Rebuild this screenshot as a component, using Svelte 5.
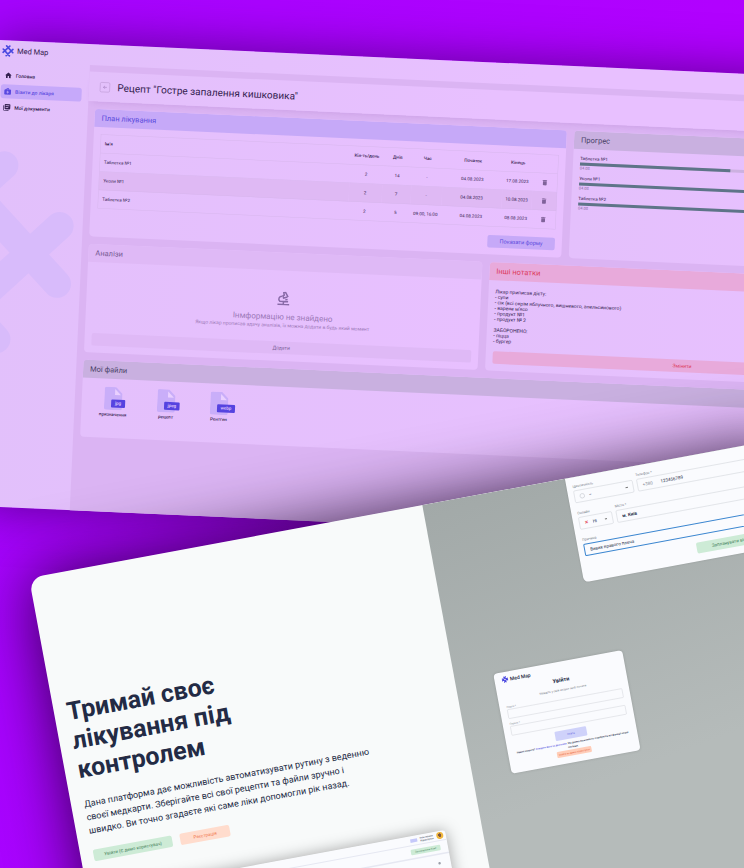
<script>
  const nav = [
    { icon: 'home', label: 'Головна' },
    { icon: 'visit', label: 'Візити до лікаря', active: true },
    { icon: 'docs', label: 'Мої документи' }
  ];
  const plan = [
    { name: 'Таблетка №1', count: 2, days: 14, time: '-', start: '04.08.2023', end: '17.08.2023' },
    { name: 'Уколи №1', count: 2, days: 7, time: '-', start: '04.08.2023', end: '10.08.2023' },
    { name: 'Таблетка №2', count: 2, days: 5, time: '09:00, 16:00', start: '04.08.2023', end: '08.08.2023' }
  ];
  const progress = [
    { name: 'Таблетка №1', value: 50, from: '04.08' },
    { name: 'Уколи №1', value: 100, from: '04.08' },
    { name: 'Таблетка №2', value: 100, from: '04.08' }
  ];
  const files = [
    { type: 'jpg', name: 'призначення' },
    { type: 'jpeg', name: 'рецепт' },
    { type: 'webp', name: 'Рентген' }
  ];
  const notes = `Лікар приписав дієту:
- супи
- сік (всі окрім яблучного, вишневого, апельсинового)
- варене м'ясо
- продукт №1
- продукт № 2

ЗАБОРОНЕНО:
- піцца
- бургер`;
</script>

{#snippet logo(cls)}
  <svg class={cls} viewBox="0 0 24 24" fill="none" stroke="currentColor" stroke-linecap="round" aria-hidden="true">
    <path d="M21 9 9 21M21 15 9 3M15 3 3 15M15 21 3 9" />
  </svg>
{/snippet}

<div class="stage">
  <section class="window app">
    <header class="topbar">{@render logo('mark')}<span>Med Map</span></header>
    <div class="body">
      <nav class="sidebar">
        {@render logo('watermark')}
        {#each nav as item}
          <a href="#{item.icon}" class:active={item.active}>
            <svg viewBox="0 0 24 24" fill="currentColor" aria-hidden="true">
              {#if item.icon === 'home'}
                <path d="M10 20v-6h4v6h5v-8h3L12 3 2 12h3v8z" />
              {:else if item.icon === 'visit'}
                <path fill-rule="evenodd" d="M20 6h-4V4l-2-2h-4L8 4v2H4L2 8v12l2 2h16l2-2V8zM10 4h4v2h-4zm6 11h-3v3h-2v-3H8v-2h3v-3h2v3h3z" />
              {:else}
                <path d="M3 6H1v14l2 2h14v-2H3z" />
                <path fill-rule="evenodd" d="M7 2 5 4v12l2 2h13l2-2V4l-2-2zm1 4h11v2H8zm0 5h8v2H8z" />
              {/if}
            </svg>
            <span>{item.label}</span>
          </a>
        {/each}
      </nav>
      <main>
        <div class="title">
          <button class="back" aria-label="Назад">
            <svg viewBox="0 0 24 24" fill="none" stroke="currentColor" stroke-width="3" aria-hidden="true"><path d="M21 12H5m7-7-7 7 7 7" /></svg>
          </button>
          <h1>Рецепт "Гостре запалення кишковика"</h1>
        </div>
        <div class="cards">
          <div class="row wide">
            <article class="card blue">
              <h2>План лікування</h2>
              <div class="content plan">
                <table>
                  <colgroup><col /><col class="c-count" /><col class="c-days" /><col class="c-time" /><col class="c-start" /><col class="c-end" /><col class="c-del" /></colgroup>
                  <thead>
                    <tr><th>Ім'я</th><th>Кіл-ть/день</th><th>Днів</th><th>Час</th><th>Початок</th><th>Кінець</th><th></th></tr>
                  </thead>
                  <tbody>
                    {#each plan as p}
                      <tr>
                        <td>{p.name}</td><td>{p.count}</td><td>{p.days}</td><td>{p.time}</td><td>{p.start}</td><td>{p.end}</td>
                        <td>
                          <button class="del" aria-label="Видалити">
                            <svg viewBox="0 0 24 24" fill="currentColor" aria-hidden="true"><path d="M4 3h5l1-1h4l1 1h5v3H4z" /><path d="M5 7h14v13l-2 2H7l-2-2z" /></svg>
                          </button>
                        </td>
                      </tr>
                    {/each}
                  </tbody>
                </table>
                <button class="btn show">Показати форму</button>
              </div>
            </article>
            <article class="card green">
              <h2>Прогрес</h2>
              <div class="content bars">
                {#each progress as p}
                  <div class="bar">
                    <span>{p.name}</span>
                    <div class="track"><div class="fill" style="width: {p.value}%"></div></div>
                    <small>{p.from}</small>
                  </div>
                {/each}
              </div>
            </article>
          </div>
          <div class="row">
            <article class="card plain">
              <h2>Аналізи</h2>
              <div class="content empty">
                <div class="message">
                  <svg viewBox="0 0 24 24" fill="none" stroke="currentColor" stroke-width="2.6" aria-hidden="true">
                    <path d="M2 22h20M5 17h15M12 17v5M10 8c-6 0-8 6-4 9" />
                    <path d="M12 2l3-1 4 7-3 2-4 1-1-4 2-1zM15 14l4-1" />
                  </svg>
                  <strong>Інмформацію не знайдено</strong>
                  <p>Якщо лікар прописав здачу аналізів, їх можна додати в будь який момент</p>
                </div>
                <button class="btn">Додати</button>
              </div>
            </article>
            <article class="card red">
              <h2>Інші нотатки</h2>
              <div class="content notes">
                <p>{notes}</p>
                <button class="btn">Змінити</button>
              </div>
            </article>
          </div>
          <article class="card green">
            <h2>Мої файли</h2>
            <div class="files">
              {#each files as f}
                <a href="#{f.type}">
                  <span class="sheet">
                    <svg viewBox="0 0 36 46" aria-hidden="true"><path d="M4 0h19l13 13v29a4 4 0 0 1-4 4H4a4 4 0 0 1-4-4V4a4 4 0 0 1 4-4z" fill="#c9aef9" /><path d="M21 4v12h12z" fill="#ead0ff" /></svg>
                    <b>{f.type}</b>
                  </span>
                  <span>{f.name}</span>
                </a>
              {/each}
            </div>
          </article>
        </div>
      </main>
    </div>
  </section>

  <section class="window landing">
    <div class="intro">
      <h1>Тримай своє лікування під контролем</h1>
      <p>Дана платформа дає можливість автоматизувати рутину з веденню своєї медкарти. Зберігайте всі свої рецепти та файли зручно і швидко. Ви точно згадаєте які саме ліки допомогли рік назад.</p>
      <div class="actions">
        <button class="enter">Увійти (Є демо користувач)</button>
        <button class="register">Реєстрація</button>
      </div>
      <div class="preview">
        <div class="bar-top"><i></i><span>Іван Іванов<br />Користувач</span><em></em></div>
        <div class="bar-tools"><button>Запланувати візит</button></div>
        <div class="bar-card"><u></u></div>
      </div>
    </div>
    <div class="side">
      <form class="visit" onsubmit={(e) => e.preventDefault()}>
        <div class="fields">
          <div class="field w-id"><label for="kind">Ідентичність</label><div class="box pick"><i class="ring"></i><select id="kind"><option>–</option></select></div></div>
          <div class="field grow"><label for="phone">Телефон *</label><div class="box"><span>+380</span><input id="phone" value="123456789" /></div></div>
        </div>
        <div class="fields">
          <div class="field w-lang"><label for="lang">Онлайн</label><div class="box pick"><b>✕</b><select id="lang"><option>Ні</option></select></div></div>
          <div class="field grow"><label for="city">Місто *</label><input id="city" class="bold" value="м. Київ" /></div>
        </div>
        <div class="field"><label for="reason">Причина</label><input id="reason" class="focus" value="Вивих правого плеча" /></div>
        <button class="plan-btn">Запланувати візит</button>
      </form>
      <form class="login" onsubmit={(e) => e.preventDefault()}>
        <div class="brand">{@render logo('tiny')}<span>Med Map</span></div>
        <h3>Увійти</h3>
        <p class="hint">Увійдіть у свій акаунт щоб почати</p>
        <div class="line"><label for="mail">Пошта *</label><input id="mail" /></div>
        <div class="line"><label for="pass">Пароль *</label><input id="pass" type="password" /></div>
        <button class="go">Увійти</button>
        <p class="foot">Немає акаунту? <a href="#new">Створіть його за два кліки.</a> Ми даємо можливість спробувати всі функції нашої системи.</p>
        <button class="demo">Увійти як демо користувач</button>
      </form>
    </div>
  </section>
</div>

<style>
  :global(body) { margin: 0; }
  .stage {
    position: relative;
    height: 100vh;
    overflow: hidden;
    background: linear-gradient(100deg, #a604ff 0%, #ae02ff 60%, #b400ff 100%);
    font-family: Roboto, "Noto Sans", sans-serif;
  }
  .stage * { box-sizing: border-box; }
  h1, h2, h3, p { margin: 0; font-weight: 400; }
  button, input, select { font: inherit; color: inherit; border: 0; padding: 0; margin: 0; background: none; }
  select { appearance: none; }
  a { color: inherit; text-decoration: none; }

  /* Both windows are laid out at double size and shown as half-size tilted mock-ups. */
  .window { position: absolute; transform-origin: 0 0; }

  .app {
    left: 0;
    top: 40px;
    width: calc(200% + 312px);
    transform: rotate(2.6deg) scale(0.5);
    color: #33204f;
    font-size: 9px;
    background: linear-gradient(90deg, #e2c0fb, #e8c0ff 60%);
    box-shadow: 0 0 100px rgba(40, 0, 70, 0.6);
  }
  .topbar { display: flex; align-items: center; gap: 5px; height: 42px; padding-left: 4px; font-size: 15px; }
  .mark { width: 26px; height: 26px; color: #4b49e0; stroke-width: 3.1; }
  .body { display: flex; height: 891px; }
  .sidebar { position: relative; flex: none; width: 182px; padding: 14px 14px 0 6px; display: flex; flex-direction: column; gap: 4px; overflow: hidden; }
  .sidebar a { position: relative; display: flex; align-items: center; gap: 7px; height: 28px; padding-left: 6px; border-radius: 6px; font-size: 10px; font-weight: 500; }
  .sidebar a svg { width: 16px; height: 16px; }
  .sidebar a.active { background: #c6a9fa; color: #5a49e0; }
  .watermark { position: absolute; left: -270px; top: 150px; width: 464px; height: 464px; color: #d8bbfb; stroke-width: 2.9; }

  main { flex: 1; min-width: 0; padding-top: 13px; background: #dbb4f3; }
  .title { display: flex; align-items: center; gap: 15px; height: 59px; padding-left: 22px; background: linear-gradient(90deg, #e3c0fb, #e8c0ff 50%); box-shadow: 0 8px 12px -8px rgba(120, 60, 160, 0.2); }
  .title h1 { font-size: 20px; }
  .back { width: 20px; height: 20px; border: 1px solid #b593cc; border-radius: 3px; display: grid; place-items: center; color: #a581c0; }
  .back svg { width: 10px; height: 10px; }

  .cards { display: flex; flex-direction: column; gap: 15px; padding: 15px 14px; }
  .row { display: grid; grid-template-columns: 1fr 1fr; gap: 15px; }
  .row.wide { grid-template-columns: 3fr 2fr; }
  .card { display: flex; flex-direction: column; min-width: 0; border-radius: 8px; overflow: hidden; background: linear-gradient(90deg, #e4c0fc, #e8c0ff); }
  h2 { height: 36px; line-height: 36px; padding-left: 14px; font-size: 15px; }
  .blue h2 { background: #c6a9f8; color: #5848dc; }
  .green h2 { background: #c9b0e0; color: #4b4468; }
  .plain h2 { background: #dfb9f6; color: #765994; }
  .red h2 { background: #e8aadb; color: #dc3c5c; }
  .content { flex: 1; padding: 14px; display: flex; flex-direction: column; }
  .btn { height: 25px; border-radius: 4px; font-size: 10px; }

  table { width: 100%; table-layout: fixed; border-collapse: collapse; border: 1px solid #d8b6ee; }
  .c-count { width: 66px; }
  .c-days { width: 58px; }
  .c-time { width: 62px; }
  .c-start { width: 120px; }
  .c-end { width: 60px; }
  .c-del { width: 50px; }
  tr { height: 37px; border-bottom: 1px solid #d8b6ee; }
  tbody tr:nth-child(2) { background: #dfb9f4; }
  th, td { padding: 0; text-align: center; white-space: nowrap; }
  th { font-weight: 500; }
  th:first-child, td:first-child { text-align: left; padding-left: 8px; }
  .del { display: inline-block; width: 13px; height: 13px; color: #80629a; vertical-align: middle; }
  .del svg { display: block; }
  .plan { gap: 17px; }
  .show { align-self: flex-end; width: 135px; background: #c6a9f8; color: #5848dc; font-size: 11px; }

  .bars { gap: 6px; }
  .bar { height: 34px; display: flex; flex-direction: column; line-height: 10px; }
  .bar small { font-size: 8px; color: #80629a; }
  .track { height: 6px; margin: 3px 0 1px; background: #ccb1e0; }
  .fill { height: 100%; background: #5e7488; }

  .empty .message { flex: 1; display: flex; flex-direction: column; align-items: center; justify-content: flex-end; padding-bottom: 26px; color: #9c79b8; line-height: 12px; }
  .message svg { width: 28px; height: 28px; color: #896aa8; margin-bottom: 12px; }
  .message strong { font-weight: 400; font-size: 16px; line-height: 22px; }
  .message p { font-size: 10px; }
  .empty { min-height: 181px; }
  .empty .btn { background: #dfb9f6; color: #765994; }
  .notes { justify-content: space-between; }
  .notes p { white-space: pre-line; font-size: 10px; line-height: 11px; padding: 3px 0 6px; }
  .notes .btn { background: #e8aadb; color: #dc3c5c; }

  .files { display: flex; height: 118px; padding: 16px 10px; }
  .files a { width: 106px; display: flex; flex-direction: column; align-items: center; gap: 4px; font-weight: 500; }
  .sheet { position: relative; }
  .sheet svg { display: block; width: 36px; height: 46px; }
  .sheet b { position: absolute; left: 14px; top: 25px; min-width: 28px; height: 16px; padding: 0 7px; border-radius: 2px; line-height: 14px; text-align: center; background: #5543e0; color: #e8d4ff; font-weight: 500; }

  .landing {
    left: 29px;
    top: 578px;
    width: calc(200% + 60px);
    min-height: 960px;
    display: flex;
    overflow: hidden;
    border-radius: 28px;
    transform: rotate(-10.5deg) scale(0.5);
    background: #f8fafa;
    color: #232b45;
    box-shadow: 0 0 130px rgba(20, 0, 30, 0.8);
  }
  .intro { flex: none; width: 800px; padding: 248px 74px 0 26px; display: flex; flex-direction: column; }
  .intro h1 { width: 380px; font-size: 50px; line-height: 59px; font-weight: 700; }
  .intro p { margin-top: 26px; width: 590px; font-size: 18px; line-height: 27px; }
  .actions { display: flex; gap: 16px; margin-top: 26px; font-size: 9px; }
  .actions button { height: 23px; border-radius: 4px; }
  .enter { width: 160px; background: #cdebd6; color: #3f7d56; }
  .register { width: 101px; background: #ffdccd; color: #f0764b; }
  .preview { margin-top: 66px; height: 240px; border-radius: 6px; overflow: hidden; background: #fafbfe; box-shadow: 0 0 30px rgba(0, 0, 0, 0.35); display: flex; flex-direction: column; }
  .bar-top { display: flex; align-items: center; justify-content: flex-end; gap: 6px; height: 20px; padding-right: 5px; border-bottom: 2px solid #e6e8f2; font-size: 5px; line-height: 6px; }
  .bar-top i { width: 14px; height: 7px; background: #c5c8fa; }
  .bar-top em { width: 14px; height: 14px; border-radius: 50%; background: radial-gradient(circle at 50% 45%, #7c5540 30%, #f0b73e 35%); }
  .bar-tools { display: flex; justify-content: flex-end; align-items: center; height: 27px; padding-right: 15px; border-bottom: 3px solid #e6e8f2; }
  .bar-tools button { width: 60px; height: 11px; border-radius: 2px; background: #cdebd6; color: #3f7d56; font-size: 5px; }
  .bar-card { display: flex; justify-content: flex-end; padding: 14px 20px; }
  .bar-card u { width: 5px; height: 5px; border-radius: 50%; background: #9a9fa8; }

  .side { flex: 1; padding-left: 78px; background: linear-gradient(170deg, #a2a9a8, #b5bbba 60%); }
  .visit { margin-left: 212px; width: 386px; height: 211px; padding: 14px 12px; border-radius: 0 0 10px 10px; background: #fafbfe; font-size: 9px; display: flex; flex-direction: column; gap: 16px; box-shadow: 0 0 4px rgba(0, 0, 0, 0.15); }
  .fields { display: flex; gap: 8px; }
  .field { display: flex; flex-direction: column; gap: 3px; min-width: 0; }
  .field label { font-size: 7px; line-height: 10px; color: #777d88; }
  .field > input, .box { width: 100%; height: 25px; padding: 0 10px; border: 1px solid #cfd2d8; border-radius: 3px; }
  .w-id { width: 120px; }
  .w-lang { width: 68px; }
  .grow { flex: 1; }
  .box { display: flex; align-items: center; gap: 16px; }
  .box span { color: #878c96; }
  .box input { width: 160px; }
  .pick { gap: 8px; }
  .pick b { color: #e2485a; }
  .ring { width: 10px; height: 10px; border: 1px solid #b9bdc5; border-radius: 50%; }
  .pick select { flex: 1; background: linear-gradient(#777, #777) right center / 5px 2px no-repeat content-box; }
  .bold { font-weight: 700; }
  .field > .focus { border: 2px solid #3b86d0; }
  .plan-btn { align-self: flex-end; flex: none; width: 140px; height: 22px; margin-top: -2px; border-radius: 4px; background: #cdebd6; color: #3f7d56; }

  .login { margin-top: 147px; width: 262px; height: 203px; padding: 8px 14px; border-radius: 8px; background: #fafbfe; display: flex; flex-direction: column; align-items: center; font-size: 5px; line-height: 9px; box-shadow: 0 0 6px rgba(0, 0, 0, 0.15); }
  .brand { align-self: flex-start; display: flex; align-items: center; gap: 3px; font-size: 10px; font-weight: 500; }
  .tiny { width: 14px; height: 14px; color: #4b49e0; stroke-width: 4; }
  .login h3 { margin-top: 8px; font-size: 11px; line-height: 14px; font-weight: 700; }
  .hint { margin-top: 7px; font-size: 6px; color: #777d88; }
  .line { width: 100%; display: flex; flex-direction: column; margin-top: 6px; }
  .line label { color: #777d88; }
  .line input { height: 19px; border: 1px solid #d3d6dc; border-radius: 2px; }
  .go { width: 64px; height: 19px; margin-top: 8px; border-radius: 2px; background: #cfd2fa; color: #5b5ae0; flex: none; }
  .foot { margin-top: 4px; font-size: 5px; line-height: 8px; text-align: center; font-weight: 500; }
  .foot a { color: #4b49e0; }
  .demo { width: 70px; height: 12px; margin-top: 2px; flex: none; border-radius: 2px; background: #ffcdb8; color: #e8623a; }
</style>
